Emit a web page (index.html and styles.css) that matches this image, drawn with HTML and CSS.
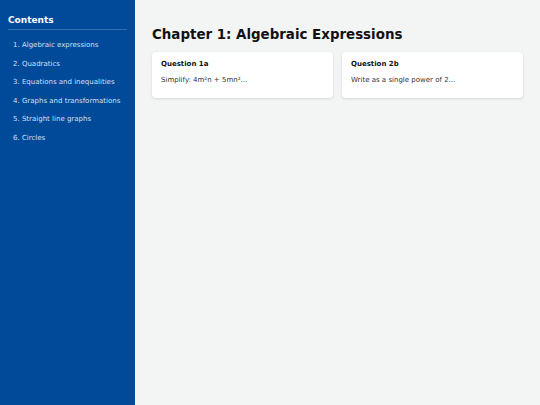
FILE: index.html
```html
<!DOCTYPE html>
<html>
<head>
<meta charset="utf-8">
<link rel="stylesheet" href="styles.css">
</head>
<body>
<div class="layout">
  <nav class="sidebar">
    <h2 class="sidebar-title">Contents</h2>
    <ul class="toc">
      <li>1. Algebraic expressions</li>
      <li>2. Quadratics</li>
      <li>3. Equations and inequalities</li>
      <li>4. Graphs and transformations</li>
      <li>5. Straight line graphs</li>
      <li>6. Circles</li>
    </ul>
  </nav>
  <main class="main">
    <h1 class="chapter-title">Chapter 1: Algebraic Expressions</h1>
    <div class="cards">
      <div class="card">
        <h3 class="card-title">Question 1a</h3>
        <p class="card-text">Simplify: 4m²n + 5mn²...</p>
      </div>
      <div class="card">
        <h3 class="card-title">Question 2b</h3>
        <p class="card-text">Write as a single power of 2...</p>
      </div>
    </div>
  </main>
</div>
</body>
</html>
```
FILE: styles.css
```css
html, body {
  margin: 0;
  padding: 0;
  height: 100%;
}
body {
  font-family: "DejaVu Sans", Verdana, sans-serif;
}
.layout {
  display: flex;
  height: 405px;
}
.sidebar {
  width: 135px;
  flex: none;
  background: #004a99;
  color: #fff;
  padding: 14px 8px 0 8px;
  box-sizing: border-box;
}
.sidebar-title {
  margin: 0;
  font-size: 9px;
  font-weight: bold;
  line-height: 12px;
  padding-bottom: 3px;
  border-bottom: 1px solid #2f6db0;
}
.toc {
  list-style: none;
  margin: 0;
  padding: 6px 0 0 5px;
  display: flex;
  flex-direction: column;
}
.toc li {
  font-size: 7px;
  color: #cfe0f5;
  line-height: 18.6px;
}
.main {
  flex: 1;
  background: #f3f4f4;
  padding: 26px 17px;
}
.chapter-title {
  margin: 0 0 9px 0;
  font-size: 13.4px;
  line-height: 17px;
  font-weight: bold;
  color: #111;
}
.cards {
  display: grid;
  grid-template-columns: 1fr 1fr;
  gap: 9px;
}
.card {
  background: #fff;
  border-radius: 4px;
  box-shadow: 0 1px 3px rgba(0,0,0,0.12);
  padding: 8px 9px 13px 9px;
}
.card-title {
  margin: 0 0 7px 0;
  font-size: 7px;
  line-height: 9px;
  font-weight: bold;
  color: #111;
}
.card-text {
  margin: 0;
  font-size: 7px;
  line-height: 9px;
  color: #333;
}
```
